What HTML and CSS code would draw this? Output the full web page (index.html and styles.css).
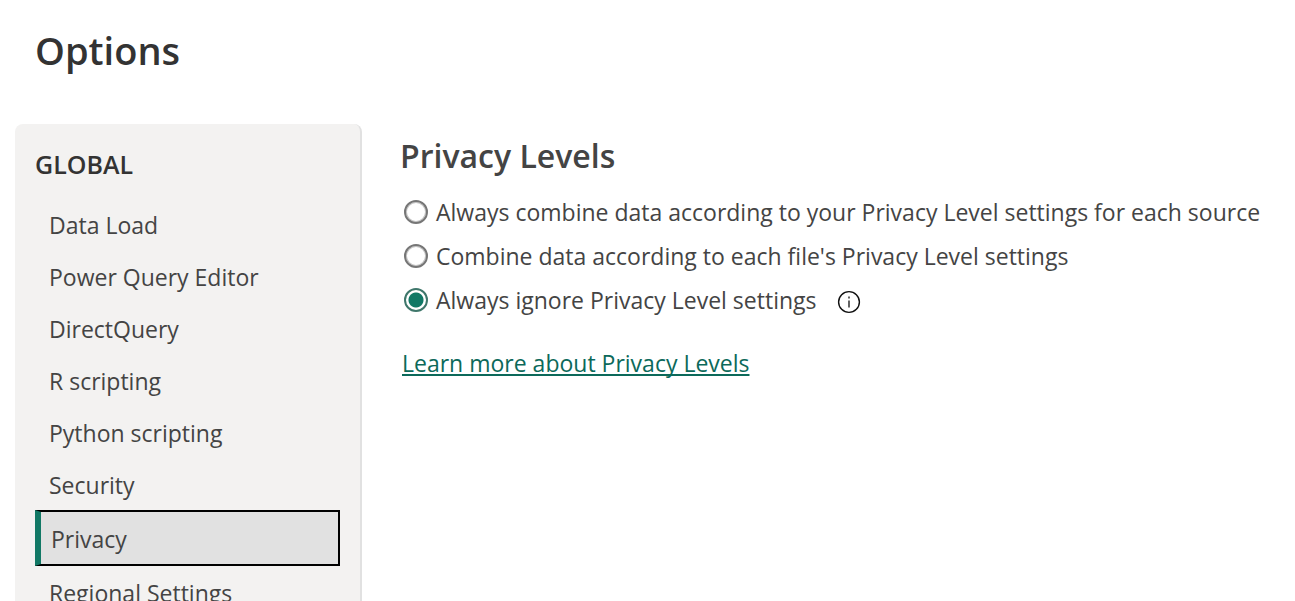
FILE: index.html
```html
<!DOCTYPE html>
<html lang="en">
<head>
<meta charset="utf-8">
<title>Options</title>
<link rel="stylesheet" href="styles.css">
</head>
<body>
<div class="dialog">
  <h1 class="title">Options</h1>
  <div class="content">
    <nav class="sidebar" aria-label="Option categories">
      <h2 class="group">GLOBAL</h2>
      <button class="item" type="button">Data Load</button>
      <button class="item" type="button">Power Query Editor</button>
      <button class="item" type="button">DirectQuery</button>
      <button class="item" type="button">R scripting</button>
      <button class="item" type="button">Python scripting</button>
      <button class="item" type="button">Security</button>
      <button class="item selected" type="button" aria-current="page">Privacy</button>
      <button class="item" type="button">Regional Settings</button>
    </nav>
    <main class="panel">
      <h2 class="heading">Privacy Levels</h2>
      <div class="options">
        <label class="option"><input class="radio" type="radio" name="privacy"><span>Always combine data according to your Privacy Level settings for each source</span></label>
        <label class="option"><input class="radio" type="radio" name="privacy"><span>Combine data according to each file's Privacy Level settings</span></label>
        <div class="row">
          <label class="option"><input class="radio" type="radio" name="privacy" checked><span>Always ignore Privacy Level settings</span></label>
          <button class="info" type="button" aria-label="More information"><svg width="24" height="24" viewBox="0 0 24 24" fill="none" stroke="#111"><circle cx="12" cy="12" r="10.4" stroke-width="1.4"/><path d="M12 10.5v7M12 6.5v2" stroke-width="1.3"/></svg></button>
        </div>
      </div>
      <a class="learn" href="#">Learn more about Privacy Levels</a>
    </main>
  </div>
</div>
</body>
</html>
```
FILE: styles.css
```css
* { box-sizing: border-box; }
html, body { height: 100%; }
body { margin: 0; overflow: hidden; background: #fff; color: #444; font: 23px/32px "Open Sans", "Noto Sans", sans-serif; }
h1, h2 { margin: 0; font-weight: 600; }
button { font: inherit; color: inherit; }
.dialog { height: 100%; display: flex; flex-direction: column; }
.title { padding: 22px 35px 46px; font-size: 38px; line-height: 56px; color: #333; }
.content { flex: 1; min-height: 0; display: flex; gap: 38px; padding-left: 15px; }
.sidebar { flex: 0 0 347px; overflow: hidden; display: flex; flex-direction: column; padding: 24px 20px 0; background: #f3f2f1; border-right: 2px solid #e1e1e1; border-radius: 8px 8px 0 0; }
.group { flex: none; margin-bottom: 20px; line-height: 32px; font-size: 25px; color: #333; }
.item { flex: none; height: 52px; padding: 0 14px 2px; border: 0; background: none; text-align: left; }
.selected { height: 56px; margin: -2px 0 2px; padding: 2px 10px 0; border: 2px solid #000; border-left: 6px solid #117865; background: #e1e1e1; }
.panel { flex: 1; min-width: 0; padding-top: 8px; }
.heading { font-size: 32px; line-height: 48px; color: #444; }
.options { padding: 10px 4px 0; }
.option { display: flex; align-items: center; gap: 8px; height: 44px; white-space: nowrap; }
.radio { appearance: none; flex: none; width: 24px; height: 24px; margin: 0; border: 2px solid #767676; border-radius: 50%; background: #fff; box-shadow: inset 0 0 0 1px #c4c4c4; }
.radio:checked { border-color: #3f776b; background: radial-gradient(circle, #117865 0 7px, #fff 8px); box-shadow: none; }
.row { display: flex; align-items: center; gap: 20px; }
.info { display: flex; padding: 0; border: 0; background: none; margin-top: 4px; }
.learn { display: inline-block; margin: 25px 0 0 2px; color: #0c695a; text-decoration-thickness: 2px; text-underline-offset: 2px; text-decoration-skip-ink: none; }
```
